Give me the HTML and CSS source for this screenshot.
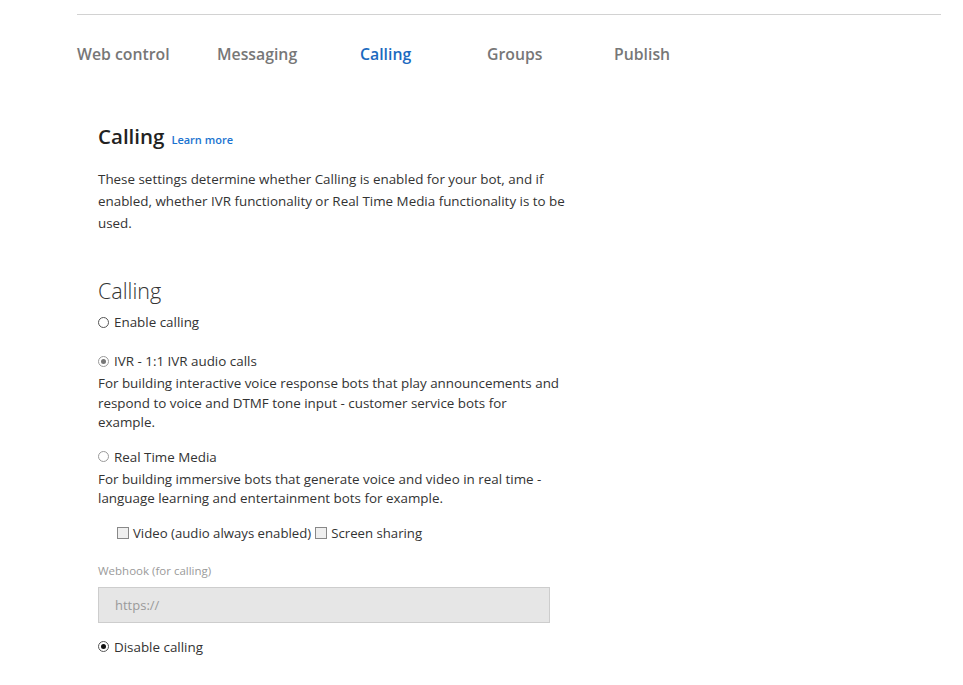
FILE: index.html
```html
<!DOCTYPE html>
<html>
<head>
<meta charset="utf-8">
<link rel="stylesheet" href="styles.css">
</head>
<body>
<div class="page">
  <div class="topline"></div>
  <nav class="tabs">
    <span class="tab">Web control</span>
    <span class="tab">Messaging</span>
    <span class="tab active">Calling</span>
    <span class="tab">Groups</span>
    <span class="tab">Publish</span>
  </nav>
  <main class="content">
    <div class="title-row">
      <h1 class="title">Calling</h1>
      <a class="learn">Learn more</a>
    </div>
    <p class="intro">These settings determine whether Calling is enabled for your bot, and if enabled, whether IVR functionality or Real Time Media functionality is to be used.</p>

    <h2 class="section">Calling</h2>
    <div class="option opt-enable"><span class="radio"></span><span>Enable calling</span></div>

    <div class="option opt-ivr"><span class="radio checked disabled"></span><span>IVR - 1:1 IVR audio calls</span></div>
    <p class="desc">For building interactive voice response bots that play announcements and respond to voice and DTMF tone input - customer service bots for example.</p>

    <div class="option opt-rtm"><span class="radio disabled"></span><span>Real Time Media</span></div>
    <p class="desc">For building immersive bots that generate voice and video in real time - language learning and entertainment bots for example.</p>

    <div class="checks">
      <span class="check"></span><span>Video (audio always enabled)</span>
      <span class="check"></span><span>Screen sharing</span>
    </div>

    <div class="field-label">Webhook (for calling)</div>
    <div class="input">https://</div>

    <div class="option opt-disable"><span class="radio checked"></span><span>Disable calling</span></div>
  </main>
</div>
</body>
</html>
```
FILE: styles.css
```css
* { box-sizing: border-box; }
html, body { margin: 0; padding: 0; background: #fff; }
body {
  font-family: "Open Sans", "Noto Sans", sans-serif;
  color: #333;
  font-size: 13.4px;
}
.page { padding-top: 14px; }
.topline {
  margin-left: 77px;
  width: 864px;
  height: 1px;
  background: #d2d2d2;
}
.tabs {
  display: grid;
  grid-template-columns: 140px 143px 127px 127px auto;
  margin: 27px 0 0 77px;
  height: 24px;
  align-items: center;
}
.tab {
  font-size: 15.8px;
  font-weight: 600;
  color: #777;
  white-space: nowrap;
}
.tab.active { color: #1b6ac0; }
.content {
  margin: 55px 0 0 98px;
  width: 452px;
}
.title-row {
  display: flex;
  align-items: baseline;
  gap: 7px;
  height: 30px;
}
.title {
  margin: 0;
  font-size: 20.5px;
  font-weight: 600;
  color: #222;
  line-height: 30px;
}
.learn {
  font-size: 11px;
  font-weight: 600;
  color: #1a73d0;
}
.intro {
  margin: 17px 0 0;
  width: 468px;
  line-height: 22px;
}
.section {
  margin: 43px 0 0;
  font-size: 21.5px;
  font-weight: 300;
  line-height: 28px;
  color: #333;
}
.option {
  display: flex;
  align-items: center;
  gap: 5px;
  height: 20px;
}
.opt-enable { margin-top: 7px; }
.opt-ivr { margin-top: 19px; }
.opt-rtm { margin-top: 14px; }
.opt-disable { margin-top: 14px; }
.desc {
  margin: 3px 0 0;
  width: 462px;
  line-height: 19.5px;
}
.radio {
  width: 11px;
  height: 11px;
  border-radius: 50%;
  border: 1px solid #555;
  background: #fff;
  position: relative;
  flex: none;
}
.radio.disabled { border-color: #9a9a9a; }
.radio.checked::after {
  content: "";
  position: absolute;
  left: 2px;
  top: 2px;
  width: 5px;
  height: 5px;
  border-radius: 50%;
  background: #111;
}
.radio.checked.disabled::after { background: #777; }
.checks {
  display: flex;
  align-items: center;
  gap: 4px;
  margin: 14px 0 0 19px;
  height: 20px;
  font-size: 13.2px;
}
.check {
  width: 12px;
  height: 12px;
  border: 1px solid #888;
  background: #efefef;
  flex: none;
}
.field-label {
  margin-top: 20px;
  font-size: 11.5px;
  color: #9a9a9a;
  line-height: 16px;
}
.input {
  margin-top: 8px;
  height: 36px;
  width: 452px;
  background: #e6e6e6;
  border: 1px solid #cdcdcd;
  color: #9a9a9a;
  padding-left: 16px;
  line-height: 34px;
  font-size: 13px;
}
```
